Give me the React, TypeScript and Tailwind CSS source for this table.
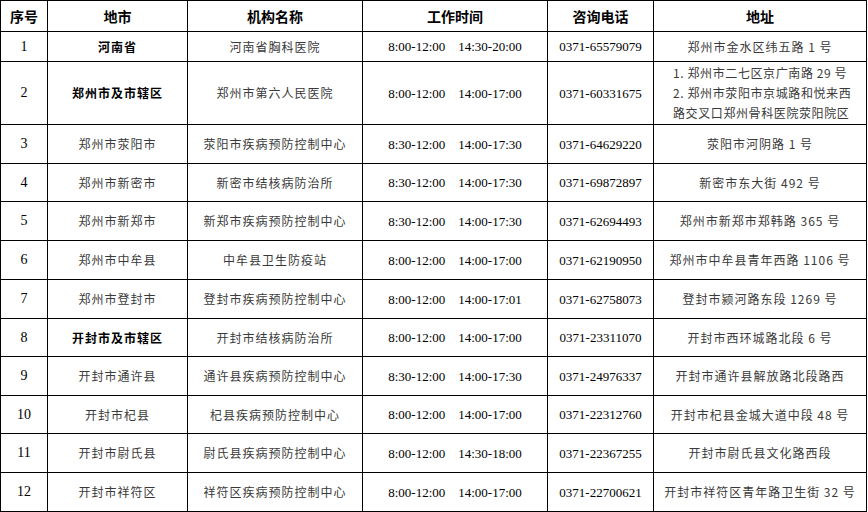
import React from "react";

const cjk = "font-['Noto_Sans_CJK_SC',sans-serif]";
const serif = "font-['Liberation_Serif','Times_New_Roman',serif]";

type Row = {
  n: string;
  city: string;
  bold?: boolean;
  org: string;
  time: [string, string];
  phone: string;
  addr: string | string[];
  h: string;
};

const rows: Row[] = [
  { n: "1", city: "河南省", bold: true, org: "河南省胸科医院", time: ["8:00-12:00", "14:30-20:00"], phone: "0371-65579079", addr: "郑州市金水区纬五路 1 号", h: "h-[30px]" },
  { n: "2", city: "郑州市及市辖区", bold: true, org: "郑州市第六人民医院", time: ["8:00-12:00", "14:00-17:00"], phone: "0371-60331675", addr: ["1. 郑州市二七区京广南路 29 号", "2. 郑州市荥阳市京城路和悦来西", "路交叉口郑州骨科医院荥阳院区"], h: "h-[63px]" },
  { n: "3", city: "郑州市荥阳市", org: "荥阳市疾病预防控制中心", time: ["8:30-12:00", "14:00-17:30"], phone: "0371-64629220", addr: "荥阳市河阴路 1 号", h: "h-[39px]" },
  { n: "4", city: "郑州市新密市", org: "新密市结核病防治所", time: ["8:30-12:00", "14:00-17:30"], phone: "0371-69872897", addr: "新密市东大街 492 号", h: "h-[38px]" },
  { n: "5", city: "郑州市新郑市", org: "新郑市疾病预防控制中心", time: ["8:30-12:00", "14:00-17:30"], phone: "0371-62694493", addr: "郑州市新郑市郑韩路 365 号", h: "h-[39px]" },
  { n: "6", city: "郑州市中牟县", org: "中牟县卫生防疫站", time: ["8:00-12:00", "14:00-17:00"], phone: "0371-62190950", addr: "郑州市中牟县青年西路 1106 号", h: "h-[39px]" },
  { n: "7", city: "郑州市登封市", org: "登封市疾病预防控制中心", time: ["8:00-12:00", "14:00-17:01"], phone: "0371-62758073", addr: "登封市颍河路东段 1269 号", h: "h-[39px]" },
  { n: "8", city: "开封市及市辖区", bold: true, org: "开封市结核病防治所", time: ["8:00-12:00", "14:00-17:00"], phone: "0371-23311070", addr: "开封市西环城路北段 6 号", h: "h-[38px]" },
  { n: "9", city: "开封市通许县", org: "通许县疾病预防控制中心", time: ["8:30-12:00", "14:00-17:30"], phone: "0371-24976337", addr: "开封市通许县解放路北段路西", h: "h-[39px]" },
  { n: "10", city: "开封市杞县", org: "杞县疾病预防控制中心", time: ["8:00-12:00", "14:00-17:00"], phone: "0371-22312760", addr: "开封市杞县金城大道中段 48 号", h: "h-[38px]" },
  { n: "11", city: "开封市尉氏县", org: "尉氏县疾病预防控制中心", time: ["8:00-12:00", "14:30-18:00"], phone: "0371-22367255", addr: "开封市尉氏县文化路西段", h: "h-[39px]" },
  { n: "12", city: "开封市祥符区", org: "祥符区疾病预防控制中心", time: ["8:00-12:00", "14:00-17:00"], phone: "0371-22700621", addr: "开封市祥符区青年路卫生街 32 号", h: "h-[39px]" },
];

const headers = ["序号", "地市", "机构名称", "工作时间", "咨询电话", "地址"];

export default function App() {
  return (
    <div className="w-[868px] h-[512px] bg-white overflow-hidden">
      <table className="border-collapse table-fixed w-[866px] text-black">
        <colgroup>
          <col className="w-[47px]" />
          <col className="w-[140px]" />
          <col className="w-[175px]" />
          <col className="w-[185px]" />
          <col className="w-[106px]" />
          <col className="w-[213px]" />
        </colgroup>
        <thead>
          <tr className="h-[31px]">
            {headers.map((h) => (
              <th
                key={h}
                className={`border border-black p-0 text-center align-middle text-[14px] font-bold leading-none ${cjk}`}
              >
                {h}
              </th>
            ))}
          </tr>
        </thead>
        <tbody>
          {rows.map((r) => (
            <tr key={r.n} className={r.h}>
              <td className={`border border-black p-0 text-center align-middle text-[14px] leading-none ${serif}`}>
                {r.n}
              </td>
              <td
                className={`border border-black p-0 text-center align-middle text-[12px] leading-none tracking-[1px] ${cjk} ${
                  r.bold ? "font-bold text-black" : "text-[#3a3a3a]"
                }`}
              >
                {r.city}
              </td>
              <td className={`border border-black p-0 text-center align-middle text-[12px] leading-none tracking-[1px] text-[#3a3a3a] ${cjk}`}>
                {r.org}
              </td>
              <td className={`border border-black p-0 text-center align-middle text-[13px] leading-none whitespace-pre ${serif}`}>
                {r.time[0] + "    " + r.time[1]}
              </td>
              <td className={`border border-black p-0 text-center align-middle text-[13px] leading-none ${serif}`}>
                {r.phone}
              </td>
              <td className={`border border-black p-0 align-middle text-[12px] text-[#3a3a3a] ${cjk}`}>
                {Array.isArray(r.addr) ? (
                  <div className="flex flex-col pl-[19px] leading-[20px] tracking-[0.6px]">
                    {r.addr.map((l) => (
                      <span key={l} className="whitespace-nowrap">{l}</span>
                    ))}
                  </div>
                ) : (
                  <div className="text-center leading-none whitespace-nowrap tracking-[1px]">{r.addr}</div>
                )}
              </td>
            </tr>
          ))}
        </tbody>
      </table>
    </div>
  );
}
